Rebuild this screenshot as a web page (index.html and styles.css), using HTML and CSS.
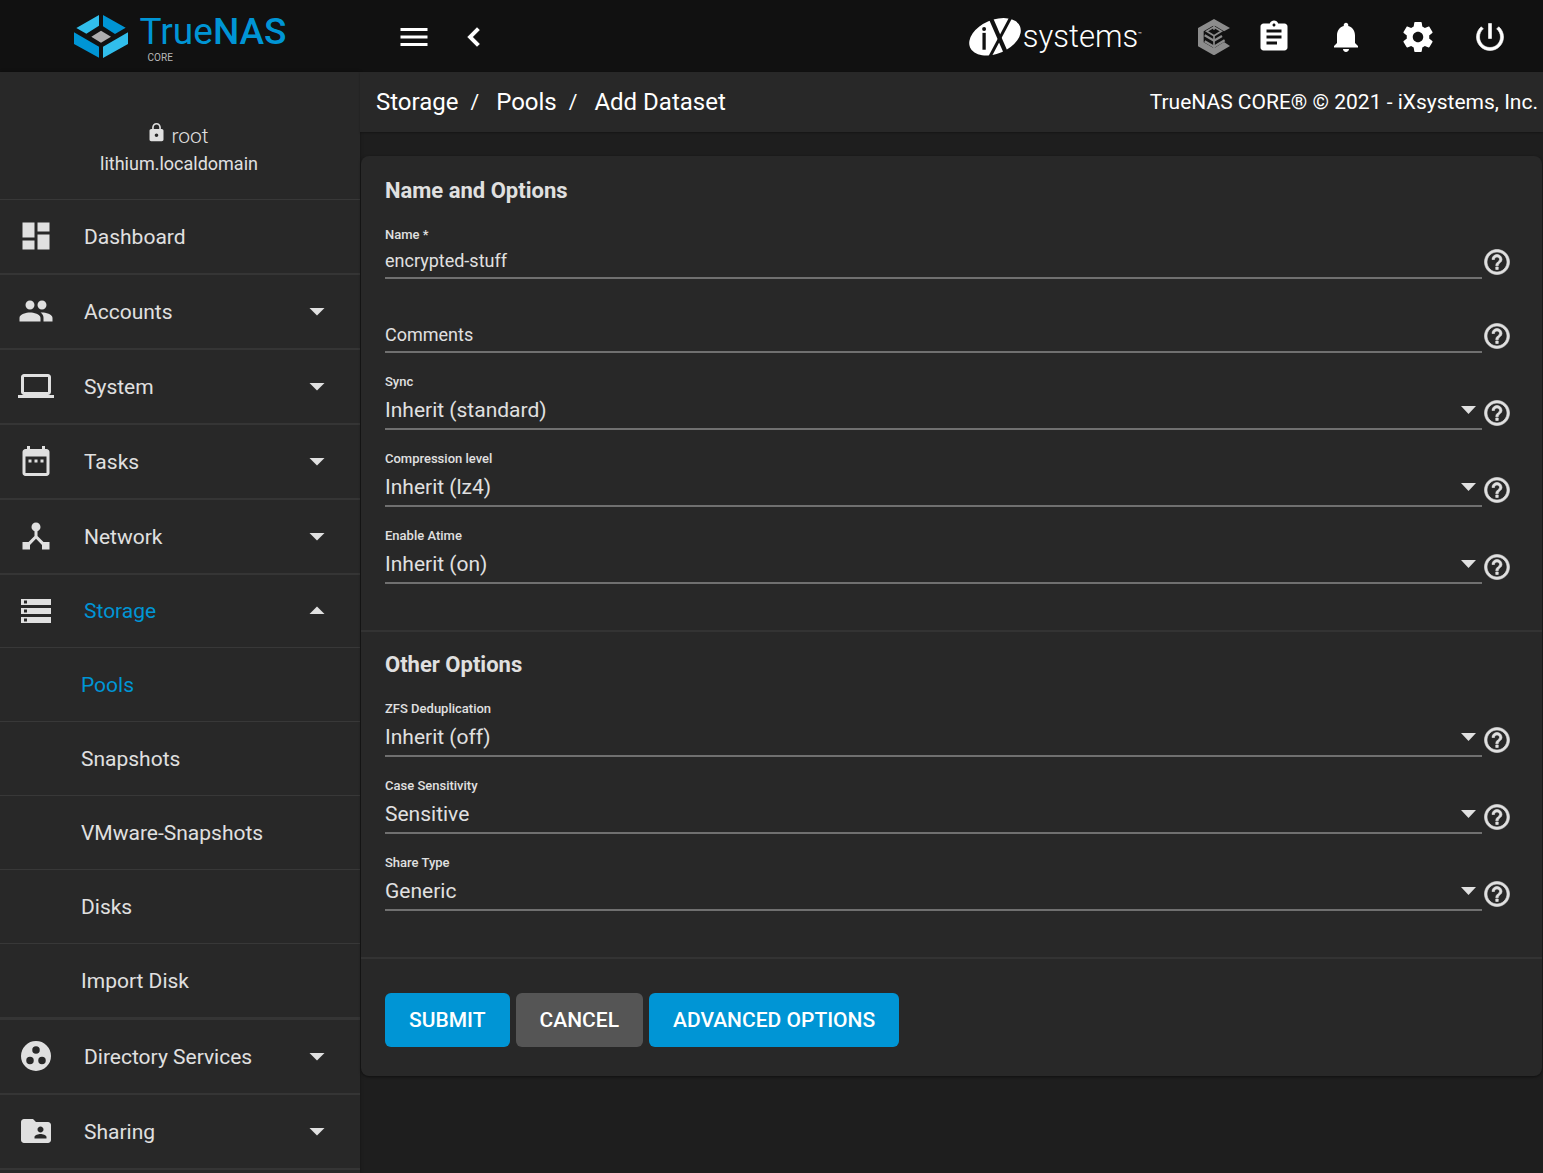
FILE: index.html
```html
<!DOCTYPE html>
<html lang="en">
<head>
    <meta charset="UTF-8">
    <meta name="viewport" content="width=device-width, initial-scale=1.0">
    <title>TrueNAS - Add Dataset</title>
    <link rel="stylesheet" href="styles.css">
</head>
<body>
    <!-- Shared icon shapes -->
    <svg class="sprite" aria-hidden="true">
        <symbol id="help" viewBox="0 0 24 24"><path stroke="currentColor" stroke-width="0.500" d="M11 18h2v-2h-2v2zm1-16C6.480 2 2 6.480 2 12s4.480 10 10 10 10-4.480 10-10S17.520 2 12 2zm0 18c-4.410 0-8-3.590-8-8s3.590-8 8-8 8 3.590 8 8-3.590 8-8 8zm0-14c-2.210 0-4 1.790-4 4h2c0-1.100.9-2 2-2s2 .9 2 2c0 2-3 1.750-3 5h2c0-2.250 3-2.500 3-5 0-2.210-1.790-4-4-4z"/></symbol>
        <symbol id="down" viewBox="0 0 24 24"><path d="M7 10l5 5 5-5z"/></symbol>
        <symbol id="up" viewBox="0 0 24 24"><path d="M7 14l5-5 5 5z"/></symbol>
    </svg>

    <header class="topbar">
        <a class="brand" href="#">
            <svg class="brand-mark" viewBox="225 43 162 129" aria-hidden="true">
                <path fill="#31beec" d="M300 43v32l-38 24-30-17zM387 95v35l-75 42v-34z"/>
                <path fill="#0095d5" d="M312 43l68 38-32 19-36-23zM225 95l75 43v33l-75-41z"/>
                <path fill="#aeadae" d="M306 90l30 18-30 18-29-18z"/>
            </svg>
            <span class="brand-text">
                <span class="brand-name">True<b>NAS</b></span>
                <span class="brand-edition">CORE</span>
            </span>
        </a>
        <div class="topbar-main">
            <button class="icon-button" aria-label="Menu"><svg viewBox="0 0 24 24"><path d="M3 18h18v-2H3v2zm0-5h18v-2H3v2zm0-7v2h18V6H3z"/></svg></button>
            <button class="icon-button" aria-label="Collapse"><svg viewBox="0 0 24 24"><path stroke="#fff" stroke-width="0.700" d="M15.410 7.410L14 6l-6 6 6 6 1.410-1.410L10.830 12z"/></svg></button>
            <a class="vendor" href="#">
                <svg class="vendor-mark" viewBox="15 18 156 115" aria-hidden="true">
                    <ellipse cx="93" cy="75" rx="82" ry="51" transform="rotate(-23 93 75)" fill="#fff"/>
                    <path d="M142 14L76 138" stroke="#111" stroke-width="9"/>
                    <path d="M80 18l48 110" stroke="#111" stroke-width="13"/>
                    <path d="M60 63v51" stroke="#111" stroke-width="10"/>
                    <circle cx="60" cy="51" r="6" fill="#111"/>
                </svg>
                <span class="vendor-name">systems</span><span class="vendor-tm">™</span>
            </a>
            <button class="icon-button truecommand" aria-label="TrueCommand">
                <svg viewBox="18 20 108 108">
                    <path d="M72 20L24 47v55l48 27 48-28-18-12-30 19-31-18V57l31-18 30 18 18-10z"/>
                    <path fill="none" stroke="#8c8c8c" stroke-width="5" d="M72 44l22 13-22 13-22-13zM72 36v16M72 72v40"/>
                    <path fill="none" stroke="#8c8c8c" stroke-width="7" d="M44 69l28 16 24-14M44 87l28 16 32-19"/>
                </svg>
            </button>
            <button class="icon-button" aria-label="Tasks"><svg viewBox="0 0 24 24"><path d="M19 3h-4.180C14.400 1.840 13.300 1 12 1c-1.300 0-2.400.84-2.820 2H5c-1.100 0-2 .9-2 2v14c0 1.100.9 2 2 2h14c1.100 0 2-.9 2-2V5c0-1.100-.9-2-2-2zm-7 0c.55 0 1 .45 1 1s-.45 1-1 1-1-.45-1-1 .45-1 1-1zm2 14H7v-2h7v2zm3-4H7v-2h10v2zm0-4H7V7h10v2z"/></svg></button>
            <button class="icon-button" aria-label="Notifications"><svg viewBox="0 0 24 24"><path d="M12 22c1.100 0 2-.9 2-2h-4c0 1.100.89 2 2 2zm6-6v-5c0-3.070-1.640-5.640-4.500-6.320V4c0-.83-.67-1.500-1.500-1.500s-1.500.67-1.500 1.500v.68C7.630 5.360 6 7.920 6 11v5l-2 2v1h16v-1l-2-2z"/></svg></button>
            <button class="icon-button" aria-label="Settings"><svg viewBox="0 0 24 24"><path d="M19.430 12.980c.04-.32.07-.64.07-.98s-.03-.66-.07-.98l2.110-1.650c.19-.15.24-.42.12-.64l-2-3.460c-.12-.22-.39-.3-.61-.22l-2.490 1c-.52-.4-1.080-.73-1.690-.98l-.38-2.650C14.460 2.180 14.250 2 14 2h-4c-.25 0-.46.18-.49.42l-.38 2.650c-.61.25-1.170.59-1.690.98l-2.490-1c-.23-.09-.49 0-.61.22l-2 3.460c-.13.22-.07.49.12.64l2.110 1.650c-.04.32-.07.65-.07.98s.03.66.07.98l-2.110 1.650c-.19.15-.24.42-.12.64l2 3.460c.12.22.39.3.61.22l2.490-1c.52.4 1.080.73 1.690.98l.38 2.650c.03.24.24.42.49.42h4c.25 0 .46-.18.49-.42l.38-2.650c.61-.25 1.170-.59 1.690-.98l2.490 1c.23.09.49 0 .61-.22l2-3.460c.12-.22.07-.49-.12-.64l-2.110-1.650zM12 15.500c-1.930 0-3.500-1.570-3.500-3.500s1.570-3.500 3.500-3.500 3.500 1.570 3.500 3.500-1.570 3.500-3.500 3.500z"/></svg></button>
            <button class="icon-button" aria-label="Power"><svg viewBox="0 0 24 24"><path stroke="#fff" stroke-width="0.400" d="M13 3h-2v10h2V3zm4.830 2.170l-1.420 1.420C17.990 7.860 19 9.810 19 12c0 3.870-3.130 7-7 7s-7-3.130-7-7c0-2.190 1.010-4.140 2.580-5.420L6.170 5.170C4.230 6.820 3 9.260 3 12c0 4.970 4.030 9 9 9s9-4.030 9-9c0-2.740-1.230-5.180-3.170-6.830z"/></svg></button>
        </div>
    </header>

    <div class="layout">
        <aside class="sidebar">
            <div class="user">
                <div class="user-name">
                    <svg viewBox="0 0 24 24" aria-hidden="true"><path d="M18 8h-1V6c0-2.760-2.240-5-5-5S7 3.240 7 6v2H6c-1.100 0-2 .9-2 2v10c0 1.100.9 2 2 2h12c1.100 0 2-.9 2-2V10c0-1.100-.9-2-2-2zm-6 9c-1.100 0-2-.9-2-2s.9-2 2-2 2 .9 2 2-.9 2-2 2zm3.100-9H8.900V6c0-1.710 1.390-3.100 3.100-3.100s3.100 1.390 3.100 3.100v2z"/></svg>
                    <span>root</span>
                </div>
                <div class="user-host">lithium.localdomain</div>
            </div>
            <nav>
                <ul class="nav">
                    <li><a class="nav-link" href="#">
                        <svg viewBox="0 0 24 24"><path d="M3 13h8V3H3v10zm0 8h8v-6H3v6zm10 0h8V11h-8v10zm0-18v6h8V3h-8z"/></svg>
                        <span>Dashboard</span></a></li>
                    <li><a class="nav-link" href="#">
                        <svg viewBox="0 0 24 24"><path d="M16 11c1.660 0 2.990-1.340 2.990-3S17.660 5 16 5c-1.660 0-3 1.340-3 3s1.340 3 3 3zm-8 0c1.660 0 2.990-1.340 2.990-3S9.660 5 8 5C6.340 5 5 6.340 5 8s1.340 3 3 3zm0 2c-2.330 0-7 1.170-7 3.500V19h14v-2.500c0-2.330-4.670-3.500-7-3.500zm8 0c-.29 0-.62.02-.97.05 1.160.84 1.970 1.970 1.970 3.450V19h6v-2.500c0-2.330-4.670-3.500-7-3.500z"/></svg>
                        <span>Accounts</span><svg><use href="#down"/></svg></a></li>
                    <li><a class="nav-link" href="#">
                        <svg viewBox="0 0 24 24"><path d="M20 18c1.100 0 1.990-.9 1.990-2L22 6c0-1.100-.9-2-2-2H4c-1.100 0-2 .9-2 2v10c0 1.100.9 2 2 2H0v2h24v-2h-4zM4 6h16v10H4V6z"/></svg>
                        <span>System</span><svg><use href="#down"/></svg></a></li>
                    <li><a class="nav-link" href="#">
                        <svg viewBox="0 0 24 24"><path d="M9 11H7v2h2v-2zm4 0h-2v2h2v-2zm4 0h-2v2h2v-2zm2-7h-1V2h-2v2H8V2H6v2H5c-1.110 0-1.990.9-1.990 2L3 20c0 1.100.89 2 2 2h14c1.100 0 2-.9 2-2V6c0-1.100-.9-2-2-2zm0 16H5V9h14v11z"/></svg>
                        <span>Tasks</span><svg><use href="#down"/></svg></a></li>
                    <li><a class="nav-link" href="#">
                        <svg viewBox="0 0 24 24"><path d="M17 16l-4-4V8.820C14.160 8.400 15 7.300 15 6c0-1.660-1.340-3-3-3S9 4.340 9 6c0 1.300.84 2.400 2 2.820V12l-4 4H3v5h5v-3.050l4-4.200 4 4.200V21h5v-5h-4z"/></svg>
                        <span>Network</span><svg><use href="#down"/></svg></a></li>
                    <li class="open"><a class="nav-link" href="#">
                        <svg viewBox="0 0 24 24"><path d="M2 20h20v-4H2v4zm2-3h2v2H4v-2zM2 4v4h20V4H2zm4 3H4V5h2v2zm-4 7h20v-4H2v4zm2-3h2v2H4v-2z"/></svg>
                        <span>Storage</span><svg><use href="#up"/></svg></a>
                        <ul class="subnav">
                            <li><a class="active" href="#">Pools</a></li>
                            <li><a href="#">Snapshots</a></li>
                            <li><a href="#">VMware-Snapshots</a></li>
                            <li><a href="#">Disks</a></li>
                            <li><a href="#">Import Disk</a></li>
                        </ul>
                    </li>
                    <li><a class="nav-link" href="#">
                        <svg viewBox="0 0 24 24"><path fill-rule="evenodd" d="M12 2a10 10 0 1 0 0 20 10 10 0 1 0 0-20zM8 17.500a2.500 2.500 0 1 1 0-5 2.500 2.500 0 0 1 0 5zM9.500 8a2.500 2.500 0 1 1 5 0 2.500 2.500 0 0 1-5 0zM16 17.500a2.500 2.500 0 1 1 0-5 2.500 2.500 0 0 1 0 5z"/></svg>
                        <span>Directory Services</span><svg><use href="#down"/></svg></a></li>
                    <li><a class="nav-link" href="#">
                        <svg viewBox="0 0 24 24"><path d="M20 6h-8l-2-2H4c-1.100 0-1.990.9-1.990 2L2 18c0 1.100.9 2 2 2h16c1.100 0 2-.9 2-2V8c0-1.100-.9-2-2-2zm-5 3c1.100 0 2 .9 2 2s-.9 2-2 2-2-.9-2-2 .9-2 2-2zm4 8h-8v-1c0-1.330 2.670-2 4-2s4 .67 4 2v1z"/></svg>
                        <span>Sharing</span><svg><use href="#down"/></svg></a></li>
                </ul>
            </nav>
        </aside>

        <main class="content">
            <div class="breadcrumb-bar">
                <nav class="breadcrumb" aria-label="Breadcrumb">
                    <a href="#">Storage</a><span class="slash">/</span>
                    <a href="#">Pools</a><span class="slash">/</span>
                    <a href="#">Add Dataset</a>
                </nav>
                <div class="copyright">TrueNAS CORE® © 2021 - iXsystems, Inc.</div>
            </div>

            <form class="card">
                <section class="fieldset">
                    <h2>Name and Options</h2>
                    <div class="field">
                        <div class="control">
                            <label for="name">Name *</label>
                            <input id="name" type="text" value="encrypted-stuff">
                        </div>
                        <button type="button" class="help" aria-label="Help"><svg><use href="#help"/></svg></button>
                    </div>
                    <div class="field field-empty">
                        <div class="control">
                            <input id="comments" type="text" placeholder="Comments" aria-label="Comments">
                        </div>
                        <button type="button" class="help" aria-label="Help"><svg><use href="#help"/></svg></button>
                    </div>
                    <div class="field">
                        <div class="control">
                            <label for="sync">Sync</label>
                            <select id="sync"><option>Inherit (standard)</option></select>
                        </div>
                        <button type="button" class="help" aria-label="Help"><svg><use href="#help"/></svg></button>
                    </div>
                    <div class="field">
                        <div class="control">
                            <label for="compression">Compression level</label>
                            <select id="compression"><option>Inherit (lz4)</option></select>
                        </div>
                        <button type="button" class="help" aria-label="Help"><svg><use href="#help"/></svg></button>
                    </div>
                    <div class="field">
                        <div class="control">
                            <label for="atime">Enable Atime</label>
                            <select id="atime"><option>Inherit (on)</option></select>
                        </div>
                        <button type="button" class="help" aria-label="Help"><svg><use href="#help"/></svg></button>
                    </div>
                </section>

                <section class="fieldset">
                    <h2>Other Options</h2>
                    <div class="field">
                        <div class="control">
                            <label for="dedup">ZFS Deduplication</label>
                            <select id="dedup"><option>Inherit (off)</option></select>
                        </div>
                        <button type="button" class="help" aria-label="Help"><svg><use href="#help"/></svg></button>
                    </div>
                    <div class="field">
                        <div class="control">
                            <label for="case">Case Sensitivity</label>
                            <select id="case"><option>Sensitive</option></select>
                        </div>
                        <button type="button" class="help" aria-label="Help"><svg><use href="#help"/></svg></button>
                    </div>
                    <div class="field">
                        <div class="control">
                            <label for="share">Share Type</label>
                            <select id="share"><option>Generic</option></select>
                        </div>
                        <button type="button" class="help" aria-label="Help"><svg><use href="#help"/></svg></button>
                    </div>
                </section>

                <div class="actions">
                    <button type="submit" class="btn btn-primary">SUBMIT</button>
                    <button type="button" class="btn">CANCEL</button>
                    <button type="button" class="btn btn-primary">ADVANCED OPTIONS</button>
                </div>
            </form>
        </main>
    </div>
</body>
</html>
```
FILE: styles.css
```css
* {
    box-sizing: border-box;
}
body {
    margin: 0;
    min-height: 100vh;
    display: flex;
    flex-direction: column;
    background-color: #1e1e1e;
    color: #e0e0e0;
    font-family: Roboto, Arial, sans-serif;
    font-size: 21px;
}
a {
    color: inherit;
    text-decoration: none;
}
ul {
    list-style: none;
    margin: 0;
    padding: 0;
}
button {
    border: none;
    padding: 0;
    background: none;
    font-family: inherit;
    cursor: pointer;
}
svg {
    display: block;
    flex: none;
    fill: currentColor;
}
.sprite {
    display: none;
}

/* Top bar */
.topbar {
    display: flex;
    height: 72px;
    background-color: #111;
    color: #fff;
}
.brand {
    width: 360px;
    display: flex;
    align-items: center;
    justify-content: center;
    gap: 12px;
}
.brand-mark {
    width: 54px;
    height: 43px;
}
.brand-text {
    display: flex;
    flex-direction: column;
    padding-top: 2px;
}
.brand-name {
    color: #0095d5;
    font-size: 37px;
    line-height: 42px;
}
.brand-name b {
    font-weight: 500;
}
.brand-edition {
    padding-left: 8px;
    color: #b8b8b8;
    font-size: 10px;
    line-height: 10px;
}
.topbar-main {
    flex: 1;
    display: flex;
    align-items: center;
    gap: 36px;
    padding: 2px 35px 0 36px;
}
.icon-button {
    color: #fff;
}
.icon-button svg {
    width: 36px;
    height: 36px;
}
.topbar-main .icon-button:nth-child(2) {
    margin-left: -12px;
}
.vendor {
    margin-left: auto;
    display: flex;
    align-items: center;
    margin-right: 18px;
}
.vendor-mark {
    width: 52px;
    height: 38px;
}
.vendor-name {
    padding-left: 2px;
    font-size: 31px;
    line-height: 36px;
    font-weight: 300;
}
.vendor-tm {
    padding-bottom: 8px;
    font-size: 6px;
}
.truecommand {
    margin-right: -12px;
    color: #8c8c8c;
}

/* Sidebar */
.layout {
    flex: 1;
    display: flex;
}
.sidebar {
    width: 360px;
    flex: none;
    background-color: #282828;
    box-shadow: 0 0 3px rgba(0,0,0,0.4);
}
.user {
    display: flex;
    flex-direction: column;
    align-items: center;
    height: 128px;
    padding: 50px 2px 0 0;
    border-bottom: 1px solid #383838;
}
.user-name {
    display: flex;
    gap: 4px;
    padding-right: 3px;
    line-height: 28px;
    font-weight: 300;
}
.user-name svg {
    width: 21px;
    height: 21px;
}
.user-host {
    font-size: 18px;
    line-height: 28px;
}
.nav > li {
    border-bottom: 2px solid #353535;
}
.nav > .open {
    border-bottom-width: 3px;
}
.nav-link {
    display: flex;
    align-items: center;
    height: 73px;
    padding: 0 25px 0 18px;
}
.nav-link svg {
    width: 36px;
    height: 36px;
    margin-bottom: 1px;
}
.nav-link span {
    flex: 1;
    padding-left: 30px;
}
.open .nav-link {
    height: 72px;
}
.open .nav-link span,
.subnav .active {
    color: #0095d5;
}
.subnav a {
    display: flex;
    align-items: center;
    height: 74px;
    padding-left: 81px;
    border-top: 1px solid #383838;
}

/* Page content */
.content {
    flex: 1;
    min-width: 0;
}
.breadcrumb-bar {
    display: flex;
    align-items: center;
    justify-content: space-between;
    height: 60px;
    padding: 0 5px 0 16px;
    background-color: #282828;
    color: #fff;
    box-shadow: 0 1px 2px rgba(0,0,0,0.3);
}
.breadcrumb {
    display: flex;
    align-items: center;
    font-size: 24px;
}
.breadcrumb .slash {
    padding: 0 17px 0 12px;
    font-size: 21px;
}
.card {
    margin: 24px 1px 24px 1px;
    padding-top: 2px;
    border-radius: 8px;
    background-color: #282828;
    box-shadow: 0 1px 3px rgba(0,0,0,0.5);
}
.fieldset {
    display: flex;
    flex-direction: column;
    gap: 21px;
    padding: 18px 30px 46px 24px;
    border-bottom: 2px solid #333;
}
h2 {
    margin: 0;
    font-size: 22px;
    line-height: 30px;
    font-weight: 700;
}
.field {
    display: flex;
    align-items: flex-end;
}
.field-empty {
    padding-top: 17px;
}
.control {
    flex: 1;
    display: flex;
    flex-direction: column;
    position: relative;
}
.control label {
    font-size: 13px;
    line-height: 16px;
    font-weight: 500;
}
.control input,
.control select {
    width: 100%;
    padding: 0;
    border: none;
    border-bottom: 2px solid #707070;
    border-radius: 0;
    outline: none;
    appearance: none;
    background: none;
    color: #e0e0e0;
    font-family: inherit;
}
.control input {
    height: 36px;
    font-size: 18px;
}
.control input::placeholder {
    color: #e0e0e0;
    opacity: 1;
}
.control select {
    height: 40px;
    padding-top: 2px;
    font-size: 21px;
}
/* drop-down arrow laid over the select */
.control:has(select)::after {
    content: "";
    position: absolute;
    right: 6px;
    bottom: 16px;
    width: 15px;
    height: 8px;
    background-color: #e0e0e0;
    clip-path: polygon(0 0, 100% 0, 50% 100%);
    pointer-events: none;
}
.help {
    padding-bottom: 2px;
    color: #e0e0e0;
}
.help svg {
    width: 30px;
    height: 30px;
}
.actions {
    display: flex;
    gap: 6px;
    padding: 34px 24px 29px;
}
.btn {
    height: 54px;
    padding: 0 24px;
    border-radius: 6px;
    background-color: #555;
    color: #fff;
    font-size: 21px;
    font-weight: 500;
}
.btn-primary {
    background-color: #0095d5;
}
```
